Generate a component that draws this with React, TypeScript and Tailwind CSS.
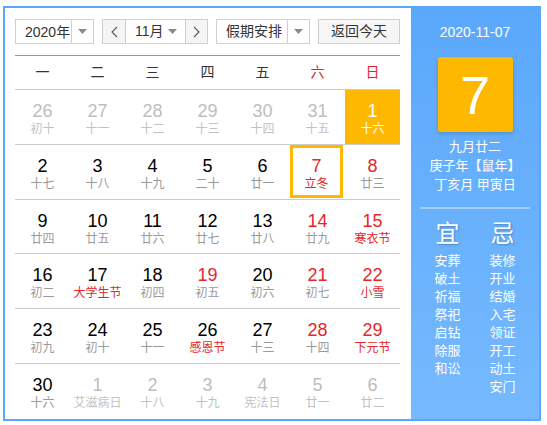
import React from "react";

type Cell = { n: number; l: string; o?: boolean; rn?: boolean; rl?: boolean; sel?: boolean; today?: boolean };

const rows: Cell[][] = [
  [
    { n: 26, l: "初十", o: true },
    { n: 27, l: "十一", o: true },
    { n: 28, l: "十二", o: true },
    { n: 29, l: "十三", o: true },
    { n: 30, l: "十四", o: true },
    { n: 31, l: "十五", o: true },
    { n: 1, l: "十六", sel: true },
  ],
  [
    { n: 2, l: "十七" },
    { n: 3, l: "十八" },
    { n: 4, l: "十九" },
    { n: 5, l: "二十" },
    { n: 6, l: "廿一" },
    { n: 7, l: "立冬", rn: true, rl: true, today: true },
    { n: 8, l: "廿三", rn: true },
  ],
  [
    { n: 9, l: "廿四" },
    { n: 10, l: "廿五" },
    { n: 11, l: "廿六" },
    { n: 12, l: "廿七" },
    { n: 13, l: "廿八" },
    { n: 14, l: "廿九", rn: true },
    { n: 15, l: "寒衣节", rn: true, rl: true },
  ],
  [
    { n: 16, l: "初二" },
    { n: 17, l: "大学生节", rl: true },
    { n: 18, l: "初四" },
    { n: 19, l: "初五", rn: true },
    { n: 20, l: "初六" },
    { n: 21, l: "初七", rn: true },
    { n: 22, l: "小雪", rn: true, rl: true },
  ],
  [
    { n: 23, l: "初九" },
    { n: 24, l: "初十" },
    { n: 25, l: "十一" },
    { n: 26, l: "感恩节", rl: true },
    { n: 27, l: "十三" },
    { n: 28, l: "十四", rn: true },
    { n: 29, l: "下元节", rn: true, rl: true },
  ],
  [
    { n: 30, l: "十六" },
    { n: 1, l: "艾滋病日", o: true },
    { n: 2, l: "十八", o: true },
    { n: 3, l: "十九", o: true },
    { n: 4, l: "宪法日", o: true },
    { n: 5, l: "廿一", o: true },
    { n: 6, l: "廿二", o: true },
  ],
];

const weekdays = ["一", "二", "三", "四", "五", "六", "日"];
const yi = ["安葬", "破土", "祈福", "祭祀", "启钻", "除服", "和讼"];
const ji = ["装修", "开业", "结婚", "入宅", "领证", "开工", "动土", "安门"];

function Caret() {
  return (
    <svg width="9" height="5" viewBox="0 0 9 5" className="shrink-0">
      <path d="M0 0 L9 0 L4.5 5 Z" fill="#8a8a8a" />
    </svg>
  );
}

function Chevron({ dir }: { dir: "l" | "r" }) {
  return (
    <svg width="7" height="12" viewBox="0 0 7 12">
      <path
        d={dir === "l" ? "M6 1 L1 6 L6 11" : "M1 1 L6 6 L1 11"}
        fill="none"
        stroke="#555"
        strokeWidth="1.1"
      />
    </svg>
  );
}

function DayCell({ c }: { c: Cell }) {
  let numColor = "text-black";
  let lunColor = "text-[#9a9a9a]";
  if (c.o) {
    numColor = "text-[#bdbdbd]";
    lunColor = "text-[#c2c2c2]";
  }
  if (c.rn) numColor = "text-[#e5262c]";
  if (c.rl) lunColor = "text-[#e5262c]";
  if (c.sel) {
    numColor = "text-white";
    lunColor = "text-white";
  }
  return (
    <div
      className={
        "flex flex-col items-center box-border " +
        (c.sel ? "bg-[#ffb800] " : "") +
        (c.today ? "border-[3px] border-[#ffb800] mr-[2px] mb-[1px] pt-[7px]" : "pt-[10px]")
      }
    >
      <div className={"text-[18px] leading-[22px] " + numColor}>{c.n}</div>
      <div className={"text-[12px] leading-[14px] whitespace-nowrap " + lunColor}>{c.l}</div>
    </div>
  );
}

export default function App() {
  return (
    <div
      className="w-[547px] h-[425px] bg-white overflow-hidden"
      style={{ fontFamily: '"Liberation Sans", "Noto Sans CJK SC", sans-serif' }}
    >
      <div className="ml-[3px] mt-[6px] w-[538px] h-[415px] border-2 border-[#5aa7fb] flex box-border">
        {/* left */}
        <div className="w-[406px] pl-[10px] pt-[11px] flex flex-col">
          <div className="flex h-[25px] gap-[8px] text-[14px] text-[#333] whitespace-nowrap">
            <div className="w-[79px] h-[25px] border border-[#cfcfcf] flex box-border">
              <div className="w-[55px] shrink-0 flex items-center pl-[9px] leading-none">2020年</div>
              <div className="flex-1 border-l border-[#cfcfcf] flex items-center justify-center">
                <Caret />
              </div>
            </div>
            <div className="w-[106px] h-[25px] border border-[#cfcfcf] flex box-border">
              <div className="w-[23px] bg-[#f5f5f5] border-r border-[#cfcfcf] flex items-center justify-center">
                <Chevron dir="l" />
              </div>
              <div className="flex-1 flex items-center pl-[9px] pr-[8px] justify-between">
                <span>11月</span>
                <Caret />
              </div>
              <div className="w-[22px] bg-[#f5f5f5] border-l border-[#cfcfcf] flex items-center justify-center">
                <Chevron dir="r" />
              </div>
            </div>
            <div className="w-[94px] h-[25px] border border-[#cfcfcf] flex box-border">
              <div className="w-[70px] flex items-center pl-[9px] shrink-0">假期安排</div>
              <div className="flex-1 border-l border-[#cfcfcf] flex items-center justify-center">
                <Caret />
              </div>
            </div>
            <div className="w-[82px] h-[25px] border border-[#cfcfcf] bg-[#f6f6f6] flex items-center justify-center box-border">
              返回今天
            </div>
          </div>
          <div className="w-[385px] mt-[11px] h-[1px] bg-[#5aa7fb]" />
          <div className="w-[385px] grid grid-cols-7 h-[34px] border-b border-[#cccccc] text-[14px]">
            {weekdays.map((w, i) => (
              <div
                key={w}
                className={"flex items-center justify-center " + (i >= 5 ? "text-[#e5262c]" : "text-[#333]")}
              >
                {w}
              </div>
            ))}
          </div>
          {rows.map((r, ri) => (
            <div
              key={ri}
              className={
                "w-[385px] grid grid-cols-7 h-[55px] " + (ri < 5 ? "border-b border-[#cccccc]" : "")
              }
            >
              {r.map((c, ci) => (
                <DayCell key={ci} c={c} />
              ))}
            </div>
          ))}
        </div>
        {/* right */}
        <div className="flex-1 bg-gradient-to-b from-[#5aa8fb] to-[#76b9fe] flex flex-col items-center text-white">
          <div className="pt-[14px] text-[14px] leading-[20px]">2020-11-07</div>
          <div className="mt-[15px] w-[75px] h-[75px] bg-[#ffb800] rounded-[3px] shadow-[0_2px_4px_rgba(0,0,0,0.15)] flex items-center justify-center text-[54px] leading-none">
            7
          </div>
          <div className="mt-[5px] text-[13px] leading-[19px] text-center">
            <div>九月廿二</div>
            <div>庚子年【鼠年】</div>
            <div>丁亥月 甲寅日</div>
          </div>
          <div className="mt-[13px] w-[110px] h-[2px] bg-[#a3cdfd]" />
          <div className="mt-[11px] flex gap-[15px]">
            <div className="w-[40px] flex flex-col items-center">
              <div className="text-[24px] leading-[28px] [text-shadow:1px_1px_2px_rgba(0,0,0,0.25)]">宜</div>
              <div className="mt-[4px] flex flex-col items-center text-[13px] leading-[18px]">
                {yi.map((t) => (
                  <div key={t}>{t}</div>
                ))}
              </div>
            </div>
            <div className="w-[40px] flex flex-col items-center">
              <div className="text-[24px] leading-[28px] [text-shadow:1px_1px_2px_rgba(0,0,0,0.25)]">忌</div>
              <div className="mt-[4px] flex flex-col items-center text-[13px] leading-[18px]">
                {ji.map((t) => (
                  <div key={t}>{t}</div>
                ))}
              </div>
            </div>
          </div>
        </div>
      </div>
    </div>
  );
}
